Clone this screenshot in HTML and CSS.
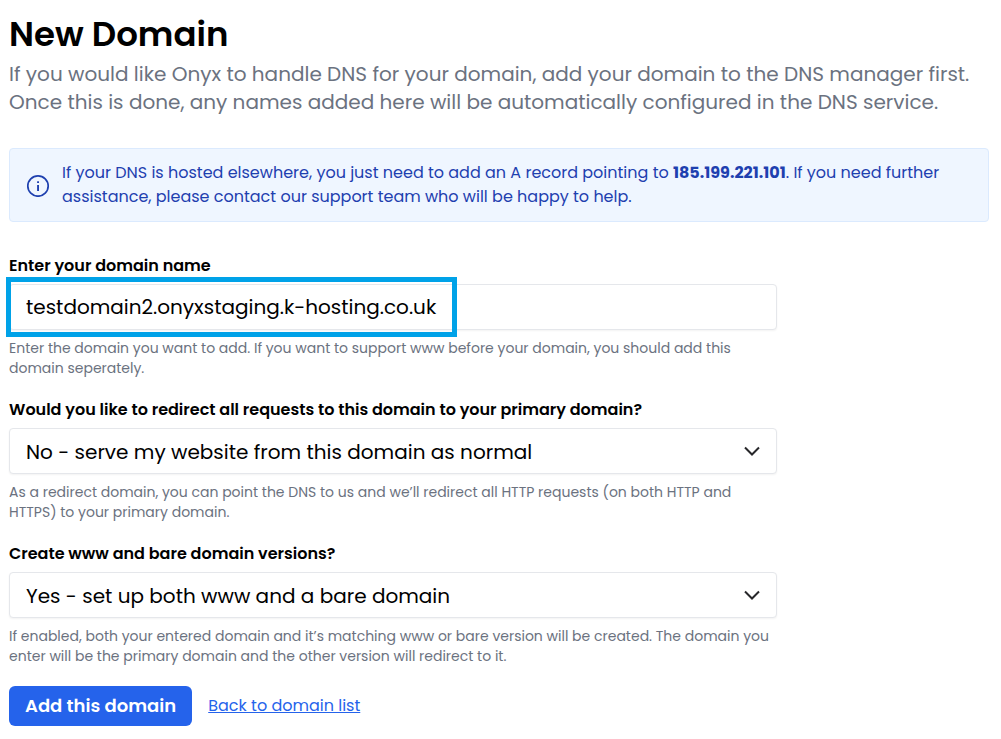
FILE: index.html
```html
<!DOCTYPE html>
<html lang="en">
<head>
<meta charset="utf-8">
<meta name="viewport" content="width=device-width, initial-scale=1">
<title>New Domain</title>
<link rel="stylesheet" href="styles.css">
</head>
<body>
<main class="page">
  <header class="intro">
    <h1 class="title">New Domain</h1>
    <p class="lead">If you would like Onyx to handle DNS for your domain, add your domain to the DNS manager first. Once this is done, any names added here will be automatically configured in the DNS service.</p>
  </header>

  <aside class="notice">
    <svg class="notice-icon" viewBox="0 0 24 24" fill="currentColor" aria-hidden="true">
      <circle cx="12" cy="13" r="10.2" fill="none" stroke="currentColor" stroke-width="1.7"/>
      <rect x="11.1" y="8.3" width="1.9" height="1.7"/>
      <rect x="11.1" y="12" width="1.9" height="6"/>
    </svg>
    <p class="notice-text">If your DNS is hosted elsewhere, you just need to add an A record pointing to <strong class="address">185.199.221.101</strong>. If you need further assistance, please contact our support team who will be happy to help.</p>
  </aside>

  <form class="form">
    <div class="field">
      <label class="label" for="domain">Enter your domain name</label>
      <div class="control-wrap">
        <input class="control" id="domain" type="text" value="testdomain2.onyxstaging.k-hosting.co.uk" aria-describedby="domain-help">
        <span class="highlight"></span>
      </div>
      <p class="help" id="domain-help">Enter the domain you want to add. If you want to support www before your domain, you should add this domain seperately.</p>
    </div>

    <div class="field">
      <label class="label" for="redirect">Would you like to redirect all requests to this domain to your primary domain?</label>
      <div class="control-wrap">
        <select class="control select" id="redirect" aria-describedby="redirect-help">
          <option>No - serve my website from this domain as normal</option>
        </select>
        <svg class="chevron" viewBox="0 0 18 12" aria-hidden="true"><path d="M2 2.5l7 7 7-7"/></svg>
      </div>
      <p class="help" id="redirect-help">As a redirect domain, you can point the DNS to us and we’ll redirect all HTTP requests (on both HTTP and HTTPS) to your primary domain.</p>
    </div>

    <div class="field">
      <label class="label" for="versions">Create www and bare domain versions?</label>
      <div class="control-wrap">
        <select class="control select" id="versions" aria-describedby="versions-help">
          <option>Yes - set up both www and a bare domain</option>
        </select>
        <svg class="chevron" viewBox="0 0 18 12" aria-hidden="true"><path d="M2 2.5l7 7 7-7"/></svg>
      </div>
      <p class="help" id="versions-help">If enabled, both your entered domain and it’s matching www or bare version will be created. The domain you enter will be the primary domain and the other version will redirect to it.</p>
    </div>

    <div class="actions">
      <button class="button" type="submit">Add this domain</button>
      <a class="link" href="#">Back to domain list</a>
    </div>
  </form>
</main>
</body>
</html>
```
FILE: styles.css
```css
* {
  box-sizing: border-box;
}

body {
  margin: 0;
  background: #fff;
  color: #000;
  font-family: Poppins, Inter, "Open Sans", sans-serif;
  font-size: 16px;
  line-height: 24px;
}

h1,
p {
  margin: 0;
}

.page {
  padding: 14px 12px 13px 9px;
}

.title {
  margin-bottom: 6px;
  font-size: 34px;
  font-weight: 600;
  line-height: 40px;
}

.lead {
  color: #6b7280;
  font-size: 20px;
  line-height: 28px;
}

.notice {
  display: flex;
  align-items: center;
  gap: 12px;
  margin: 32px 0;
  padding: 12px 16px;
  border: 1px solid #dbeafe;
  border-radius: 4px;
  background: #eff6ff;
  color: #1e40af;
}

.notice-icon {
  flex: none;
  width: 24px;
  height: 24px;
}

.address {
  font-weight: 700;
}

.form {
  max-width: 768px;
}

.field {
  margin-bottom: 20px;
}

.label {
  display: block;
  margin-bottom: 6px;
  font-weight: 600;
}

.control-wrap {
  position: relative;
}

.control {
  display: block;
  width: 100%;
  height: 46px;
  padding: 8px 16px;
  border: 1px solid #e5e7eb;
  border-radius: 4px;
  background: #fff;
  box-shadow: 0 1px 2px rgba(0, 0, 0, 0.05);
  color: #000;
  font: inherit;
  font-size: 20px;
  line-height: 28px;
}

.select {
  appearance: none;
  padding: 9px 48px 7px 16px;
}

.chevron {
  position: absolute;
  top: 17px;
  right: 16px;
  width: 18px;
  height: 12px;
  fill: none;
  stroke: #27272a;
  stroke-width: 2;
  pointer-events: none;
}

.highlight {
  position: absolute;
  top: -7px;
  left: -3px;
  width: 451px;
  max-width: 100%;
  height: 60px;
  border: 5px solid #00a2e8;
  pointer-events: none;
}

.help {
  margin-top: 8px;
  color: #6b7280;
  font-size: 14px;
  line-height: 20px;
}

.actions {
  display: flex;
  align-items: center;
  gap: 16px;
}

.button {
  height: 40px;
  padding: 0 16px;
  border: 0;
  border-radius: 6px;
  background: #2563eb;
  color: #fff;
  font: inherit;
  font-size: 18px;
  font-weight: 600;
}

.link {
  color: #2563eb;
  text-decoration: underline;
}
```
